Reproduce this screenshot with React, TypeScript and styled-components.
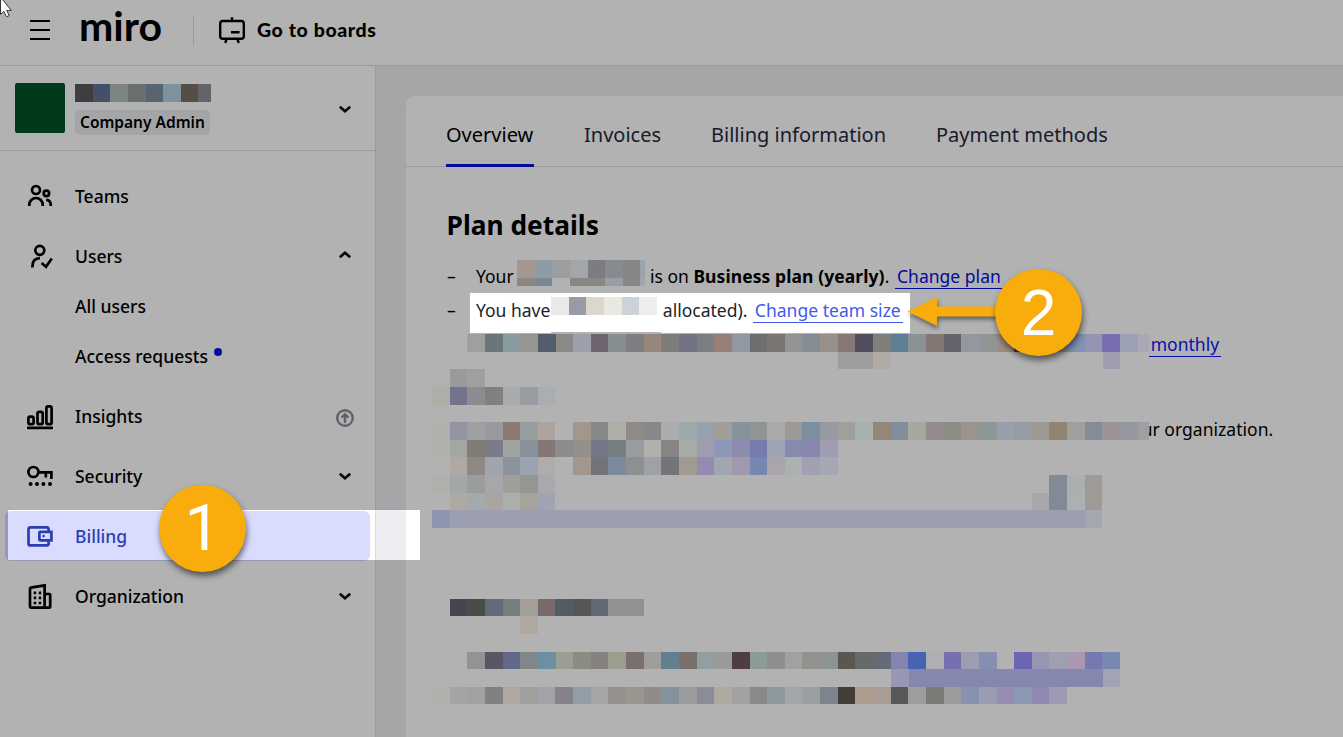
import React from 'react';
import styled, { createGlobalStyle, css } from 'styled-components';

const GlobalStyle = createGlobalStyle`
  *, *::before, *::after { box-sizing: border-box; }
  html, body { margin: 0; height: 100%; overflow: hidden; }
  body { font-family: 'Noto Sans', sans-serif; color: #000; background: #fff; }
`;

const CELL = 17.655;

const Page = styled.div`
  position: relative;
  width: 100%;
  height: 100vh;
  overflow: hidden;
  display: flex;
  flex-direction: column;
  background: #fff;
`;

const Header = styled.header`
  flex: none;
  height: 66px;
  display: flex;
  align-items: flex-start;
  border-bottom: 1px solid #dcdde0;
  padding-left: 30px;
`;

const MenuIcon = styled.svg`
  margin-top: 20px;
  width: 20px;
  height: 20px;
`;

const Wordmark = styled.div`
  width: 115px;
  margin: 3px 0 0 29px;
  font: 700 41px/46px Lato, sans-serif;
`;

const BoardsLink = styled.a`
  display: flex;
  align-items: center;
  height: 30px;
  margin: 15px 0 0 -1px;
  padding-left: 24px;
  border-left: 1px solid #dcdde0;
  gap: 11px;
  font: 900 19.5px/30px Lato, sans-serif;
  letter-spacing: 0.6px;
  white-space: nowrap;
`;

const Body = styled.div`
  flex: 1;
  display: flex;
  min-height: 0;
`;

const Sidebar = styled.aside`
  flex: none;
  width: 376px;
  border-right: 1px solid #dcdde0;
`;

const Account = styled.div`
  height: 85px;
  display: flex;
  align-items: flex-start;
  padding: 17px 20px 0 15px;
  border-bottom: 1px solid #dcdde0;
`;

const Avatar = styled.div`
  width: 50px;
  height: 50px;
  border-radius: 2px;
  background: #005328;
`;

const AccountInfo = styled.div`
  flex: 1;
  margin: 1px 0 0 10px;
`;

const AccountToggle = styled.div`
  height: 20px;
  margin-top: 16px;
`;

const RoleBadge = styled.span`
  display: block;
  width: 135px;
  height: 25px;
  margin-top: 8px;
  padding-left: 5px;
  border-radius: 5px;
  background: #ebecef;
  font-size: 15.5px;
  font-weight: 600;
  line-height: 25px;
  white-space: nowrap;
`;

const Nav = styled.nav`
  display: flex;
  flex-direction: column;
  padding: 20px 5px 0;
`;

const NavItem = styled.a<{ $active?: boolean; $sub?: boolean; $tight?: boolean }>`
  height: 50px;
  display: flex;
  align-items: center;
  padding: 0 15px 0 20px;
  margin-bottom: ${(p) => (p.$tight ? 0 : 10)}px;
  border-radius: 6px;
  font-size: 17.5px;
  font-weight: 500;
  ${(p) => p.$sub && css`padding-left: 70px;`}
  ${(p) => p.$active && css`
    background: #d9dcfe;
    color: #2b3db5;
  `}
`;

const NavLabel = styled.span`
  flex: 1;
  display: flex;
  line-height: 24px;
  white-space: nowrap;
`;

const NavIcon = styled.svg`
  width: 30px;
  height: 30px;
  margin-right: 20px;
  overflow: visible;
  fill: none;
  stroke: currentColor;
  stroke-width: 2.7;
`;

const UpgradeIcon = styled.svg`
  width: 20px;
  height: 20px;
  margin-top: 4px;
  fill: none;
  stroke: #8c8d99;
  stroke-width: 2.4;
`;

const UnreadDot = styled.i`
  width: 8px;
  height: 8px;
  margin: 4px 0 0 6px;
  border-radius: 50%;
  background: #0612e6;
`;

const Chevron = styled.svg<{ $up?: boolean }>`
  width: 20px;
  height: 20px;
  fill: none;
  stroke: #0b0c20;
  stroke-width: 2.7;
  transform: ${(p) => (p.$up ? 'translateY(-1px) scaleY(-1)' : 'none')};
`;

const Main = styled.main`
  flex: 1;
  min-width: 0;
  background: #edeef1;
  padding: 30px 0 0 30px;
`;

const Card = styled.section`
  height: 100%;
  background: #fff;
  border-top-left-radius: 9px;
`;

const Tabs = styled.div`
  height: 71px;
  display: flex;
  gap: 50px;
  padding-left: 40px;
  border-bottom: 1px solid #dcdde0;
`;

const Tab = styled.a<{ $active?: boolean; $w: number }>`
  width: ${(p) => p.$w}px;
  height: 71px;
  padding-top: 25px;
  font-size: 20px;
  line-height: 27px;
  white-space: nowrap;
  color: ${(p) => (p.$active ? '#000' : '#27293f')};
  border-bottom: 3px solid ${(p) => (p.$active ? '#0a11df' : 'transparent')};
`;

const Details = styled.div`
  padding: 42px 0 0 26px;
`;

const Heading = styled.h2`
  margin: 0 0 15px 14.6px;
  height: 36px;
  font-size: 26.3px;
  line-height: 32px;
  font-weight: 700;
`;

const Line = styled.div<{ $soft?: boolean }>`
  display: flex;
  height: 34px;
  padding-left: 15px;
  font-size: 17.5px;
  line-height: 33px;
  white-space: nowrap;
  color: ${(p) => (p.$soft ? '#22242c' : '#000')};
`;

const Segment = styled.span<{ $w?: number; $pad?: number }>`
  flex: none;
  width: ${(p) => (p.$w ? `${p.$w}px` : 'auto')};
  padding-left: ${(p) => p.$pad ?? 0}px;
`;

const Dash = styled(Segment)`
  color: #000;
`;

const PlanName = styled.b`
  letter-spacing: 0.08px;
`;

const TextLink = styled.a<{ $color: string }>`
  height: 24px;
  margin-top: 5px;
  padding: 0 2px;
  line-height: 23px;
  letter-spacing: 0.02px;
  color: ${(p) => p.$color};
  border-bottom: 1px solid ${(p) => p.$color};
`;

const Redaction = styled.div<{ $top?: number }>`
  position: relative;
  z-index: 2;
  flex: none;
  margin-top: ${(p) => p.$top ?? 0}px;
`;

const RedactionRow = styled.div<{ $start?: number; $h?: number }>`
  display: flex;
  height: ${(p) => p.$h ?? CELL}px;
  padding-left: ${(p) => (p.$start ?? 0) * CELL}px;
`;

const Cell = styled.i<{ $last?: number }>`
  position: relative;
  z-index: 1;
  flex: none;
  width: ${(p) => p.$last ?? CELL}px;
  height: 100%;
`;

const TrailingText = styled.div<{ $tuck?: boolean; $shift: number }>`
  height: 30px;
  margin-top: ${(p) => p.$shift}px;
  margin-left: ${(p) => (p.$tuck ? -7 : 0)}px;
  font-size: 17.5px;
  line-height: 30px;
  letter-spacing: 0.03px;
  white-space: nowrap;
  display: flex;
`;

const Dim = styled.div`
  position: absolute;
  inset: 0;
  z-index: 1;
  background: rgba(0, 0, 0, 0.3);
  clip-path: path(
    evenodd,
    'M0 0H1343V737H0Z M8 510H420V560H8Z M470 293H910V333H661V332H551V333H470Z'
  );
`;

const Marker = styled.div<{ $x: number; $y: number; $font: string }>`
  position: absolute;
  z-index: 4;
  left: ${(p) => p.$x}px;
  top: ${(p) => p.$y}px;
  width: 87px;
  height: 87px;
  border-radius: 50%;
  background: #f8ad0c;
  color: #fff;
  font: 400 64px/88px ${(p) => p.$font}, sans-serif;
  text-align: center;
  box-shadow: 1px 4px 6px rgba(0, 0, 0, 0.55);
`;

const Arrow = styled.svg`
  position: absolute;
  z-index: 3;
  left: 900px;
  top: 288px;
  width: 110px;
  height: 50px;
  filter: drop-shadow(1px 3px 2px rgba(0, 0, 0, 0.45));
`;

const Pointer = styled.svg`
  position: absolute;
  z-index: 5;
  left: 0;
  top: 0;
  width: 14px;
  height: 20px;
`;

type MosaicRow = { start: number; cells: string; text?: React.ReactNode };

const expand = (cells: string) =>
  cells.split(' ').flatMap((token) => {
    const [color, count] = token.split('*');
    return Array(Number(count ?? 1)).fill(color === '_' ? 'transparent' : `#${color}`);
  });

const Cells = ({ cells, last }: { cells: string; last?: number }) => {
  const list = expand(cells);
  return (
    <>
      {list.map((color, i) => (
        <Cell key={i} $last={i === list.length - 1 ? last : undefined} style={{ background: color }} />
      ))}
    </>
  );
};

const rows: MosaicRow[] = [
  {
    start: 2,
    cells:
      '9f9f9f 6a7679 8a9aa1 94968f 525d6e 8a8a88 9da0aa 6d6470 858e90 7f7e82 97867c 7d7e7c 737384 7b7f80 967f74 9198a1 6c6e70 797674 919395 858c93 98908a 867975 514f5e 807f7b 5f7f97 8c9193 857874 63646c 9496a0 929495 a08c82 4a4038 8c8c90 8c92a0 8492b3 9594b1 786eb0 9ba0b3 aaa8b5',
    text: (
      <TrailingText $shift={-6}>
        <TextLink $color="#0710ad">monthly</TextLink>
      </TrailingText>
    ),
  },
  { start: 23, cells: '9d9d9d*2 b0aca5 _*12 9f9db0' },
  { start: 1, cells: '9b9a9a a09f9e' },
  { start: 0, cells: 'adaea8 73748c 8a8c8f 80807f a9abaa 999da1 a9aeb3' },
  { start: 0, cells: '_' },
  {
    start: 0,
    cells:
      'b1b0ac 9394a1 9da09f 9b99a0 8d7a72 989d9f aca49d _ a3968a 878988 adaea5 8e8b89 86888a acacae 9ea9ab 96a2ae a09e97 85939b 909495 a9aba8 9d9896 7c8fa0 969ba3 9f9f9c a6b1b0 938779 838e9b a6a7a1 938c8c 8c8c84 99948e 8d9798 979fac 959da3 9d9a93 918473 a09f9b 858c99 9a9594 94989c a09fa0',
    text: <TrailingText $shift={-8} $tuck>ur organization.</TrailingText>,
  },
  {
    start: 0,
    cells:
      'b1b0ac a3a7a2 807b75 7b7c87 9fa4a2 88919a 827775 8b8c8b 919089 767887 758082 989b9f b1b0aa 868484 a7aba8 a09bad 8c98b5 8e8cae 767cae 9da3b0 868bae 8a87ae 9e9db1',
  },
  {
    start: 1,
    cells:
      'aea9a2 908885 a2a4ac 8a929d 9aa3b0 b0acaa _ a2968d 737477 7b8b9d 8d8f91 9ea2a4 747578 a09a93 938bb0 a0a5b0 a298ae 7586b0 aaa5ad acb1b1 a19fb0 a5a8b3',
  },
  { start: 0, cells: 'b1b0ad a1a8a9 9b9d9d a6a7aa 9f9e9a 959594 a8a9ac _*28 838995 acafb0 9f9a96' },
  { start: 1, cells: 'adaaa4 a4aaac aaa4a2 abaeab a5a49c a0a4b0 _*27 a8a8a8 838a97 adb0b1 9f9a96' },
  { start: 0, cells: '8e95b0 9c9fb0*36 a3a7b2' },
  { start: 0, cells: '_' },
  { start: 0, cells: '_' },
  { start: 0, cells: '_' },
  { start: 0, cells: '_' },
  { start: 1, cells: '464550 4b4c47 646a7b 748180 a19f98 776b70 515d66 575556 656875 909195 909191' },
  { start: 5, cells: 'aea8a1' },
  { start: 0, cells: '_' },
  {
    start: 2,
    cells:
      '929393 585662 62688a 818789 6c8fa3 9d9e91 8b8b7f 86817f 9a9e8d 7a706d 9e9e9d 627e91 78706a 929e9f 9a9b98 4e3e43 8d9b95 8d8e8d a1a1a2 92918b 8c9491 5b564f 666b69 646a79 8584b0 4664b2 afaeb3 776fb0 9b9db0 868fb3 _ 6a66b3 9696b3 9da0b1 aa98b2 7679b0 7987b3',
  },
  { start: 26, cells: '9697b4 8687af*11 a2a3b3' },
  {
    start: 0,
    cells:
      'b0b0ad a4a4a4 a2a2a2 808082 ada8a2 9f9f9d a1a3a9 86828a 919ea8 a5a4a6 95918d 979790 908b89 86929b 9b9b9c 8b8c97 aeaaa2 a1a29f 888988 8e999f a3a5a9 9b9fa2 7c858e 433e3a aa9d8d a99d96 58585a 9e9c9d 7c7b76 9d9b9c 8792b0 999db2 988cb0 8b98b4 8e89b0 9c9ab2',
  },
];

const Caret = ({ up }: { up?: boolean }) => (
  <Chevron viewBox="0 0 20 20" $up={up}>
    <path d="M4.8 7.8l5.2 4.4 5.2-4.4" />
  </Chevron>
);

const icons = {
  teams: (
    <NavIcon viewBox="0 0 30 30">
      <circle cx="11" cy="9" r="4" />
      <circle cx="21.4" cy="12.4" r="2.7" />
      <path d="M4.3 25v-1.3a6.7 6.7 0 0 1 13.4 0V25M21.2 18.8c3 .3 4.5 2.3 4.5 4.9V25" />
    </NavIcon>
  ),
  users: (
    <NavIcon viewBox="0 0 30 30">
      <circle cx="14.8" cy="9.3" r="4.5" />
      <path d="M7.4 26.4v-1c0-5 2.7-8.1 7.6-8.2M16.6 22l4.4 3.8 5.8-8.4" />
    </NavIcon>
  ),
  insights: (
    <NavIcon viewBox="0 0 30 30">
      <rect x="3.4" y="15.6" width="5.2" height="7.6" rx="1.8" />
      <rect x="12.5" y="10.8" width="5.2" height="12.4" rx="1.8" />
      <rect x="21.4" y="5.4" width="5.2" height="17.8" rx="1.8" />
      <path d="M2 26.9h26" />
    </NavIcon>
  ),
  security: (
    <NavIcon viewBox="0 0 30 30">
      <circle cx="8.4" cy="11" r="5" />
      <path d="M13.4 11.4h13v6.6M20.8 11.4v5" />
      <g fill="currentColor" stroke="none">
        <circle cx="5.6" cy="23" r="2" />
        <circle cx="12" cy="23" r="2" />
        <circle cx="18.4" cy="23" r="2" />
        <circle cx="25" cy="23" r="2" />
      </g>
    </NavIcon>
  ),
  billing: (
    <NavIcon viewBox="0 0 30 30">
      <path d="M23.6 10.5V8.4a2 2 0 0 0-2-2H5.5a2 2 0 0 0-2 2v14a2 2 0 0 0 2 2h16.1a2 2 0 0 0 2-2v-2.2" />
      <path d="M15.4 10.8h11v8.6h-11a1 1 0 0 1-1-1v-6.6a1 1 0 0 1 1-1z" />
      <circle cx="18.6" cy="15.1" r="1.3" fill="currentColor" stroke="none" />
    </NavIcon>
  ),
  organization: (
    <NavIcon viewBox="0 0 30 30">
      <path d="M5.8 26.6a.8.8 0 0 1-.8-.8V7.4a.8.8 0 0 1 .7-.8l13.9-2.2v22.2z" />
      <path d="M20 13h4.4a.8.8 0 0 1 .8.8v12a.8.8 0 0 1-.8.8H19" />
      <path d="M8.7 11.8h2.5M13.7 11.8h2.5M8.7 16.8h2.5M13.7 16.8h2.5M8.7 22h2.5M13.7 22h2.5" />
    </NavIcon>
  ),
};

export default function App() {
  return (
    <Page>
      <GlobalStyle />
      <Header>
        <MenuIcon viewBox="0 0 20 20">
          <path d="M0 1h20M0 10h20M0 19h20" stroke="#000" strokeWidth="2" />
        </MenuIcon>
        <Wordmark>miro</Wordmark>
        <BoardsLink>
          <svg width="28" height="28" viewBox="0 0 28 28" fill="none" stroke="#000" strokeWidth="2.4">
            <rect x="2.2" y="5" width="23.6" height="17.8" rx="2.6" />
            <path d="M14 1.2V5M8.6 23l-1.4 4M19.4 23l1.4 4M13 16.2h8.6" />
          </svg>
          Go to boards
        </BoardsLink>
      </Header>
      <Body>
        <Sidebar>
          <Account>
            <Avatar />
            <AccountInfo>
              <Redaction>
                <RedactionRow $h={18}>
                  <Cells cells="3e3e40 44506a 7c8483 69706f 586472 7d929d 554e48 64626b" last={12.4} />
                </RedactionRow>
              </Redaction>
              <RoleBadge>Company Admin</RoleBadge>
            </AccountInfo>
            <AccountToggle>
              <Caret />
            </AccountToggle>
          </Account>
          <Nav>
            <NavItem>{icons.teams}<NavLabel>Teams</NavLabel></NavItem>
            <NavItem $tight>{icons.users}<NavLabel>Users</NavLabel><Caret up /></NavItem>
            <NavItem $sub $tight><NavLabel>All users</NavLabel></NavItem>
            <NavItem $sub><NavLabel>Access requests<UnreadDot /></NavLabel></NavItem>
            <NavItem>
              {icons.insights}
              <NavLabel>Insights</NavLabel>
              <UpgradeIcon viewBox="0 0 20 20">
                <circle cx="10" cy="10" r="7.8" />
                <path d="M10 15V6.4M6.6 9.6L10 6.2l3.4 3.4" />
              </UpgradeIcon>
            </NavItem>
            <NavItem>{icons.security}<NavLabel>Security</NavLabel><Caret /></NavItem>
            <NavItem $active>{icons.billing}<NavLabel>Billing</NavLabel></NavItem>
            <NavItem>{icons.organization}<NavLabel>Organization</NavLabel><Caret /></NavItem>
          </Nav>
        </Sidebar>
        <Main>
          <Card>
            <Tabs>
              <Tab $active $w={88}>Overview</Tab>
              <Tab $w={77}>Invoices</Tab>
              <Tab $w={175}>Billing information</Tab>
              <Tab $w={172}>Payment methods</Tab>
            </Tabs>
            <Details>
              <Heading>Plan details</Heading>
              <Line>
                <Dash $w={29}>–</Dash>
                <Segment $w={41}>Your</Segment>
                <Redaction>
                  <RedactionRow>
                    <Cells cells="a3978f 8c9ca6 9b9d9e a3a6a9 7b7d82 868b90 858687 9ba3ab" last={5} />
                  </RedactionRow>
                  <RedactionRow $h={8}>
                    <Cells cells="8e8680 7a8895 _ 868780 888983 979ea7 868686 a0a7ad" last={5} />
                  </RedactionRow>
                </Redaction>
                <Segment $w={249.5} $pad={4.5}>
                  is on <PlanName>Business plan (yearly)</PlanName>.
                </Segment>
                <TextLink $color="#060fe0">Change plan</TextLink>
              </Line>
              <Line $soft>
                <Dash $w={29}>–</Dash>
                <Segment $w={75}>You have</Segment>
                <Redaction $top={3}>
                  <RedactionRow $h={18}>
                    <Cells cells="e9e9ea 969ba6 dbd7cd ebe8e1 cdd2d9 eeeeec" />
                  </RedactionRow>
                </Redaction>
                <Segment $w={96} $pad={6}>allocated).</Segment>
                <TextLink $color="#3f5bea">Change team size</TextLink>
              </Line>
              <Redaction $top={6}>
                {rows.map((row, i) => (
                  <RedactionRow key={i} $start={row.start}>
                    <Cells cells={row.cells} last={row.text ? 11 : undefined} />
                    {row.text}
                  </RedactionRow>
                ))}
              </Redaction>
            </Details>
          </Card>
        </Main>
      </Body>
      <Dim />
      <Arrow viewBox="0 0 110 50">
        <path d="M7.5 23.5L37 9v9.5h68v10H37V38z" fill="#f8ad0c" />
      </Arrow>
      <Marker $x={159} $y={485} $font="Roboto">1</Marker>
      <Marker $x={995} $y={269} $font="'Liberation Sans'">2</Marker>
      <Pointer viewBox="0 0 14 20">
        <path d="M.5-3v17.4l3.4-3 2.6 5.4 2.7-1.2-2.5-5.2h4.6z" fill="#fff" stroke="#33343c" strokeWidth="1" />
      </Pointer>
    </Page>
  );
}
